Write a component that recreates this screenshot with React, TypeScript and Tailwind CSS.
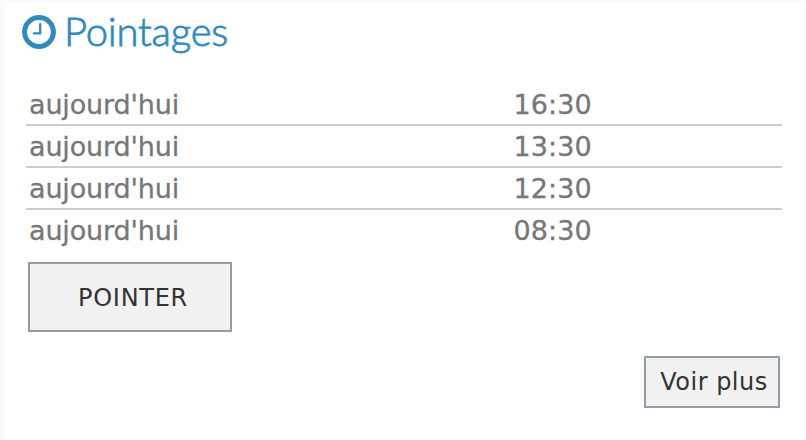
const ENTRIES = [
  { day: "aujourd'hui", time: '16:30' },
  { day: "aujourd'hui", time: '13:30' },
  { day: "aujourd'hui", time: '12:30' },
  { day: "aujourd'hui", time: '08:30' },
]

function ClockIcon() {
  return (
    <svg className="size-[34px] shrink-0" viewBox="0 0 34 34" fill="none" stroke="currentColor">
      <circle cx="17" cy="17" r="14.4" strokeWidth="5" />
      <path d="M18.2 9v9.4H11.8" strokeWidth="2.2" strokeLinecap="round" strokeLinejoin="round" />
    </svg>
  )
}

export default function App() {
  return (
    <div className="h-[440px] w-[806px] bg-[#fafafa] pl-1 pr-[2px] pt-[2px]">
      <section className="flex h-full flex-col bg-white pl-[18px] pr-[22px]">
        <h2 className="flex h-[60px] items-center gap-2 font-[Lato,sans-serif] text-[40px] font-light tracking-[-0.2px] text-[#2e8bbd] [-webkit-text-stroke:0.8px_#2e8bbd]">
          <ClockIcon />
          <span className="-mt-[3px]">Pointages</span>
        </h2>
        <ul className="ml-1 mt-[22px] font-['DejaVu_Sans',sans-serif] text-[27px] text-[#777] [-webkit-text-stroke:0.3px_#777]">
          {ENTRIES.map(({ day, time }) => (
            <li key={time} className="flex h-[42px] items-center border-b-2 border-[#ccc] pl-[3px] pt-[2px] last:border-transparent">
              <span className="w-[484.5px] tracking-[-0.15px]">{day}</span>
              <span className="tracking-[0.1px]">{time}</span>
            </li>
          ))}
        </ul>
        <button className="ml-[6px] mt-[10px] h-[70px] w-[204px] border-2 border-[#929ca6] bg-[#f1f1f1] pl-[6px] pt-[2px] font-['DejaVu_Sans',sans-serif] text-[24px] tracking-[0.7px] text-[#333]">
          POINTER
        </button>
        <button className="mr-[2px] mt-6 h-[52px] w-[136px] self-end whitespace-nowrap border-2 border-[#929ca6] bg-[#f1f1f1] pl-[4px] font-['DejaVu_Sans',sans-serif] text-[24px] tracking-[0.5px] text-[#333]">
          Voir plus
        </button>
      </section>
    </div>
  )
}
